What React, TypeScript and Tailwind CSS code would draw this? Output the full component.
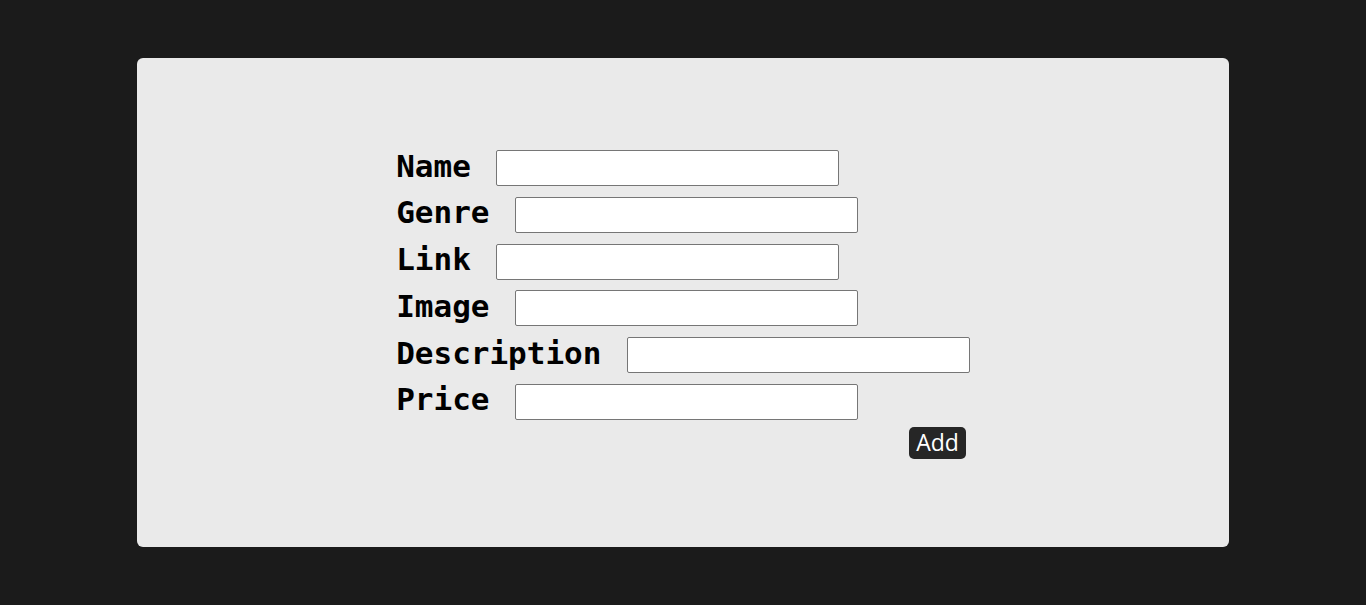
import React from 'react'

const fields = [
  { label: 'Name', name: 'name' },
  { label: 'Genre', name: 'genre' },
  { label: 'Link', name: 'link' },
  { label: 'Image', name: 'image' },
  { label: 'Description', name: 'description' },
  { label: 'Price', name: 'price' },
]

const App: React.FC = () => {
  return (
    <div className="min-h-screen bg-[#1b1b1b] flex justify-center pt-[58px]">
      {/* Card */}
      <div className="w-[1092px] h-[489px] bg-[#eaeaea] rounded-[6px] flex justify-center pt-[92px]">
        <form className="flex flex-col" onSubmit={(e) => e.preventDefault()}>
          <div className="flex flex-col gap-[10.8px]">
            {fields.map((f) => (
              <div key={f.name} className="flex items-center h-[36px]">
                <label
                  htmlFor={f.name}
                  className="text-[31px] font-bold text-black leading-none mr-[25.4px] pb-[4px] font-['DejaVu_Sans_Mono',monospace]"
                >
                  {f.label}
                </label>
                <input
                  id={f.name}
                  type="text"
                  className="w-[343px] h-[36px] bg-white border border-[#767676] rounded-[2px] outline-none px-1"
                />
              </div>
            ))}
          </div>
          <div className="flex justify-end mt-[7px] mr-[4px]">
            <button
              type="submit"
              className="h-[32px] px-[7px] bg-[#262626] text-white rounded-[5px] text-[23px] leading-none font-['Open_Sans',sans-serif]"
            >
              Add
            </button>
          </div>
        </form>
      </div>
    </div>
  )
}

export default App
